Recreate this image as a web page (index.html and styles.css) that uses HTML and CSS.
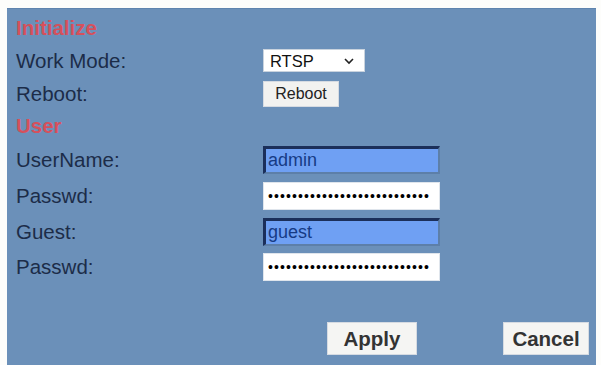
FILE: index.html
```html
<!DOCTYPE html>
<html>
<head>
<meta charset="utf-8">
<link rel="stylesheet" href="styles.css">
</head>
<body>
<div class="panel">
  <div class="row head h1">Initialize</div>
  <div class="row r33">
    <div class="label">Work Mode:</div>
    <div class="ctrl">
      <div class="selwrap">
        <select class="sel"><option>RTSP</option></select>
        <svg class="chev" width="12" height="8" viewBox="0 0 12 8"><path d="M2 2 L6 6 L10 2" fill="none" stroke="#222" stroke-width="1.6"/></svg>
      </div>
    </div>
  </div>
  <div class="row r33">
    <div class="label">Reboot:</div>
    <div class="ctrl"><button class="btn small">Reboot</button></div>
  </div>
  <div class="row head h2">User</div>
  <div class="row r36">
    <div class="label">UserName:</div>
    <div class="ctrl"><input class="inp focus" type="text" value="admin"></div>
  </div>
  <div class="row r36">
    <div class="label">Passwd:</div>
    <div class="ctrl"><input class="inp" type="password" value="aaaaaaaaaaaaaaaaaaaaaaaaaaa"></div>
  </div>
  <div class="row r35">
    <div class="label">Guest:</div>
    <div class="ctrl"><input class="inp focus" type="text" value="guest"></div>
  </div>
  <div class="row r36">
    <div class="label">Passwd:</div>
    <div class="ctrl"><input class="inp" type="password" value="aaaaaaaaaaaaaaaaaaaaaaaaaaa"></div>
  </div>
  <div class="actions">
    <button class="btn big">Apply</button>
    <button class="btn big">Cancel</button>
  </div>
</div>
</body>
</html>
```
FILE: styles.css
```css
html, body {
  margin: 0;
  padding: 0;
  background: #fdfdfb;
  height: 100%;
  overflow: hidden;
}
body {
  padding: 8px 5px 0 7px;
  box-sizing: border-box;
  font-family: "Liberation Sans", Arial, sans-serif;
}
.panel {
  background: #6b90b9;
  height: 100%;
  box-sizing: border-box;
  padding: 3px 0 0 9px;
  border-top: 1px solid #5f84ae;
}
.row {
  display: flex;
  align-items: center;
}
.head {
  color: #d6505c;
  font-weight: bold;
  font-size: 20.5px;
}
.h1 { height: 32px; }
.h2 { height: 32px; }
.r33 { height: 33px; }
.r35 { height: 35px; }
.r36 { height: 36px; }
.label {
  width: 247px;
  font-size: 20.5px;
  color: #1c2c48;
}
.ctrl {
  display: flex;
  align-items: center;
}
.selwrap {
  position: relative;
  width: 102px;
  height: 23px;
}
.sel {
  appearance: none;
  -webkit-appearance: none;
  width: 102px;
  height: 23px;
  margin: 0;
  border: 1px solid #c9d3de;
  background: #ffffff;
  font-family: "Liberation Sans", Arial, sans-serif;
  font-size: 16.5px;
  color: #111;
  padding: 0 0 0 6px;
  border-radius: 0;
}
.chev {
  position: absolute;
  right: 10px;
  top: 8px;
  pointer-events: none;
}
.btn {
  font-family: "Liberation Sans", Arial, sans-serif;
  background: #f2f2f0;
  border: 1px solid #d6dbe2;
  border-radius: 0;
  margin: 0;
  padding: 0;
  color: #222;
}
.small {
  width: 76px;
  height: 26px;
  font-size: 16px;
}
.inp {
  width: 177px;
  height: 28px;
  box-sizing: border-box;
  margin: 0;
  padding: 0 4px;
  font-family: "Liberation Sans", Arial, sans-serif;
  font-size: 18px;
  background: #ffffff;
  border: 1px solid #dfe5ec;
  color: #111;
  letter-spacing: 0;
}
.inp.focus {
  background: #6fa0f3;
  color: #163b85;
  border-top: 3px solid #1b2f5a;
  border-left: 3px solid #1b2f5a;
  border-right: 2px solid #5d7fa8;
  border-bottom: 2px solid #5d7fa8;
  padding-left: 2px;
}
.inp[type="password"] {
  font-size: 14px;
  letter-spacing: 1.1px;
  color: #000;
}
.actions {
  display: flex;
  gap: 86px;
  padding: 37px 0 0 311px;
}
.big {
  height: 33px;
  font-size: 20.5px;
  font-weight: bold;
  color: #333;
  background: #f5f5f3;
}
.big:first-child { width: 90px; }
.big:last-child { width: 86px; }
```
